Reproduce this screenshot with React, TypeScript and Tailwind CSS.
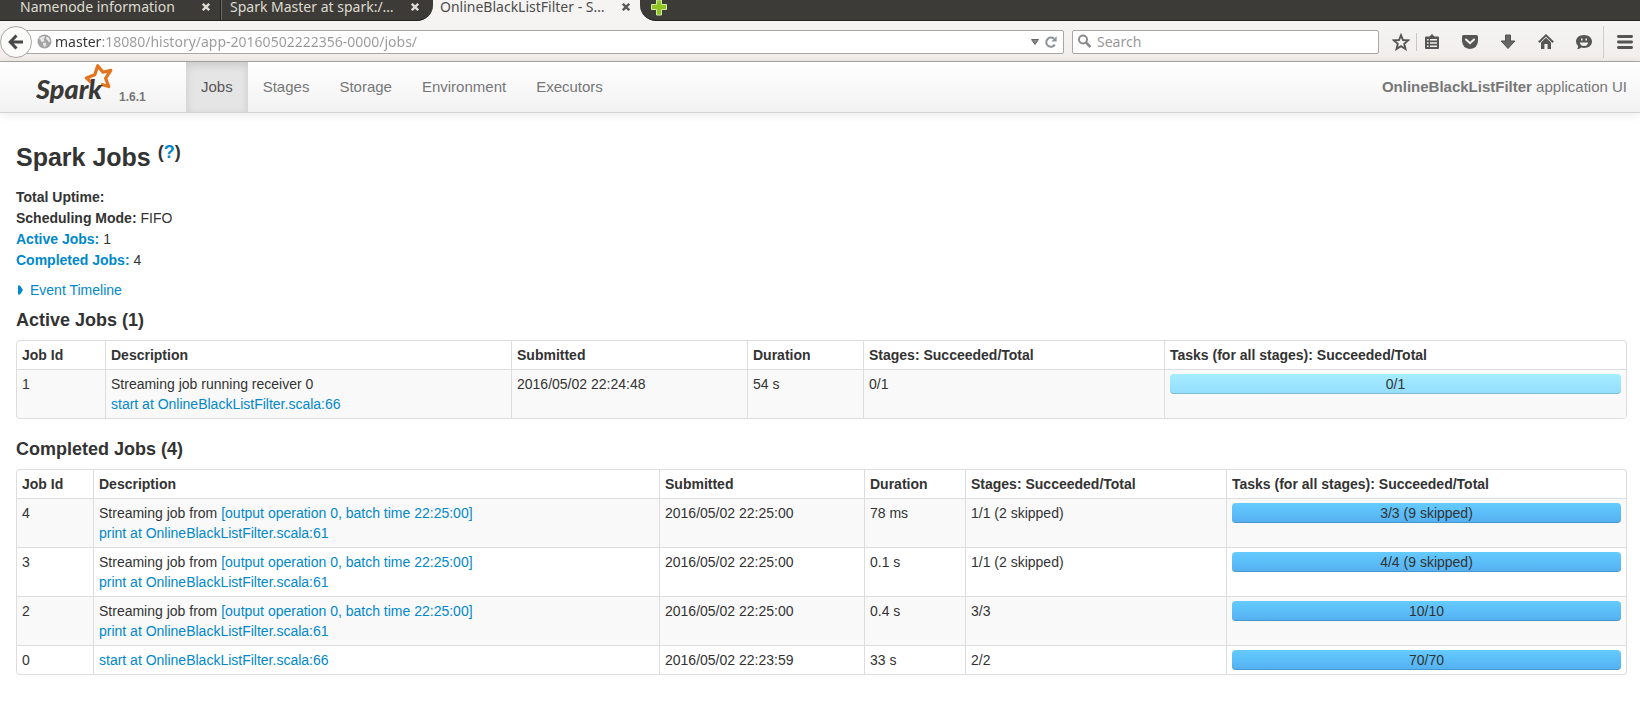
import type { ReactNode } from "react";
import clsx from "clsx";

interface Job {
  id: number;
  text?: string;
  batch?: string;
  link: string;
  submitted: string;
  duration: string;
  stages: string;
  tasks: string;
  running?: boolean;
}

const activeJobs: Job[] = [
  { id: 1, text: "Streaming job running receiver 0", link: "start at OnlineBlackListFilter.scala:66", submitted: "2016/05/02 22:24:48", duration: "54 s", stages: "0/1", tasks: "0/1", running: true },
];

const batch = "[output operation 0, batch time 22:25:00]";

const completedJobs: Job[] = [
  { id: 4, text: "Streaming job from", batch, link: "print at OnlineBlackListFilter.scala:61", submitted: "2016/05/02 22:25:00", duration: "78 ms", stages: "1/1 (2 skipped)", tasks: "3/3 (9 skipped)" },
  { id: 3, text: "Streaming job from", batch, link: "print at OnlineBlackListFilter.scala:61", submitted: "2016/05/02 22:25:00", duration: "0.1 s", stages: "1/1 (2 skipped)", tasks: "4/4 (9 skipped)" },
  { id: 2, text: "Streaming job from", batch, link: "print at OnlineBlackListFilter.scala:61", submitted: "2016/05/02 22:25:00", duration: "0.4 s", stages: "3/3", tasks: "10/10" },
  { id: 0, link: "start at OnlineBlackListFilter.scala:66", submitted: "2016/05/02 22:23:59", duration: "33 s", stages: "2/2", tasks: "70/70" },
];

const headers = ["Job Id", "Description", "Submitted", "Duration", "Stages: Succeeded/Total", "Tasks (for all stages): Succeeded/Total"];

function CloseButton({ light }: { light?: boolean }) {
  return (
    <button aria-label="Close tab" className={clsx("flex h-[14px] w-3 items-center justify-center", light ? "text-[#dfdbd2]" : "text-[#5c5a57]")}>
      <svg width="8" height="8" viewBox="0 0 8 8" stroke="currentColor" strokeWidth="2.4">
        <path d="M0.8 0.8L7.2 7.2M7.2 0.8L0.8 7.2" />
      </svg>
    </button>
  );
}

function TabStrip() {
  return (
    <div className="flex h-[21px] bg-[#f5f4f3] text-[14px] leading-[14px]">
      <div className="flex w-[433px] shrink-0 rounded-br-[16px] border-b border-[#22211e] bg-[#3c3b37] text-[#dfdbd2]">
        <div className="flex w-[221px] justify-between border-r border-[#24231f] pr-2 pl-5">
          <button className="h-[14px] whitespace-nowrap">Namenode information</button>
          <CloseButton light />
        </div>
        <div className="flex flex-1 justify-between border-l border-[#6b6963] pr-3 pl-2">
          <button className="h-[14px] whitespace-nowrap">Spark Master at spark:/…</button>
          <CloseButton light />
        </div>
      </div>
      <div className="flex w-[207px] shrink-0 justify-between pr-2 pl-[7px] text-[#4c4c4c]">
        <button className="h-[14px] whitespace-nowrap">OnlineBlackListFilter - S…</button>
        <CloseButton />
      </div>
      <div className="flex flex-1 rounded-bl-[16px] border-b border-[#22211e] bg-[#3c3b37] pl-[11px]">
        <button aria-label="New tab" className="h-[14px]">
          <svg width="16" height="16" viewBox="0 0 16 16">
            <path d="M5.5 0H10.5V4.5H15.5V9.5H10.5V15H5.5V9.5H0.5V4.5H5.5Z" fill="#8fc224" stroke="#d5e8a5" />
          </svg>
        </button>
      </div>
    </div>
  );
}

function ToolButton({ label, children }: { label: string; children: ReactNode }) {
  return (
    <button aria-label={label} className="flex w-[38px] justify-center text-[#555]">
      <svg width="18" height="18" viewBox="0 0 18 18" fill="currentColor">{children}</svg>
    </button>
  );
}

function Toolbar() {
  return (
    <div className="flex h-[41px] items-center border-b border-[#aaa8a5] bg-linear-to-b from-[#f5f4f3] to-[#f1eeec] pt-px text-[14px]">
      <button aria-label="Back" className="z-10 -mr-2 flex size-8 shrink-0 items-center justify-center rounded-full border border-[#a9a7a5] bg-[#fbfbfa]">
        <svg width="16" height="16" viewBox="0 0 16 16" fill="none" stroke="#484848" strokeWidth="3">
          <path d="M15 8H3M8.5 1.5L2.2 8L8.5 14.5" />
        </svg>
      </button>
      <div className="flex h-6 flex-1 items-center rounded-r-[2px] border border-[#a9a7a5] bg-white pr-1 pl-3">
        <svg width="15" height="15" viewBox="0 0 15 15" className="shrink-0">
          <circle cx="7.5" cy="7.5" r="7" fill="#a3a3a3" />
          <path d="M2 4.5L5 2.5L7.5 2L8 4L6.5 5L7.5 6.5L6 8L4 7.5L3.5 5.8ZM6 9L8.5 8.5L9.5 10.5L8 13L6.5 12ZM9.5 2.5L12 4L13.5 7L12 8.5L10.5 6L9 5Z" fill="#e8e8e8" />
        </svg>
        <input
          aria-label="Address"
          defaultValue="master:18080/history/app-20160502222356-0000/jobs/"
          className="ml-[3px] min-w-0 flex-1 bg-[linear-gradient(to_right,#333_47px,#999_47px)] bg-clip-text text-transparent outline-none"
        />
        <button aria-label="Show history" className="flex w-4 justify-center">
          <svg width="8" height="6" viewBox="0 0 8 6"><path d="M0.5 0.5H7.5L4 5.5Z" fill="#888" stroke="#666" /></svg>
        </button>
        <button aria-label="Reload" className="flex w-4 justify-center">
          <svg width="12" height="12" viewBox="0 0 12 12">
            <path d="M9.8 8.6A4.6 4.6 0 1 1 9 2.8" fill="none" stroke="#8b929a" strokeWidth="2" />
            <path d="M11.6 0.2V5.4H6.4Z" fill="#8b929a" />
          </svg>
        </button>
      </div>
      <div className="ml-2 flex h-6 w-[307px] items-center rounded-[2px] border border-[#a9a7a5] bg-white px-1">
        <svg width="15" height="15" viewBox="0 0 15 15" fill="none" stroke="#8c8c8c" strokeWidth="2">
          <circle cx="6" cy="5.5" r="4" />
          <path d="M8.8 8.3L13.5 13" strokeWidth="2.6" />
        </svg>
        <input aria-label="Search" placeholder="Search" className="ml-[5px] min-w-0 flex-1 outline-none placeholder:text-[#999]" />
      </div>
      <div className="flex shrink-0 items-center pl-[3px]">
        <ToolButton label="Bookmark">
          <path d="M9 2.2L11 7L16.2 7.4L12.2 10.8L13.5 16L9 13.2L4.5 16L5.8 10.8L1.8 7.4L7 7Z" fill="none" stroke="currentColor" strokeWidth="1.9" />
        </ToolButton>
        <div className="-ml-1 h-[18px] w-px bg-[#c9c7c5]" />
        <div className="-ml-1 flex">
          <ToolButton label="Bookmarks list">
            <path fillRule="evenodd" d="M3 3.5H6.5L9 1L11.5 3.5H15Q16 3.5 16 4.5V15Q16 16 15 16H3Q2 16 2 15V4.5Q2 3.5 3 3.5ZM4 6V7.6H5.6V6ZM7 6V7.6H14V6ZM4 9.2V10.8H5.6V9.2ZM7 9.2V10.8H14V9.2ZM4 12.4V14H5.6V12.4ZM7 12.4V14H14V12.4Z" />
          </ToolButton>
          <ToolButton label="Pocket">
            <path d="M2.5 2H15.5Q17 2 17 3.5V8Q16.5 15.5 9 16Q1.5 15.5 1 8V3.5Q1 2 2.5 2Z" />
            <path d="M5 6.5L9 10.2L13 6.5" fill="none" stroke="#f4f2f1" strokeWidth="2" strokeLinecap="round" />
          </ToolButton>
          <ToolButton label="Downloads">
            <path d="M6.5 2H11.5V8H15.8L9 15.5L2.2 8H6.5Z" fill="#666" stroke="#505050" />
          </ToolButton>
          <ToolButton label="Home">
            <path d="M1.8 9.2L9 2.2L16.2 9.2" fill="none" stroke="currentColor" strokeWidth="1.9" />
            <path d="M4 9.5L9 4.7L14 9.5V16H10.6V11H7.4V16H4Z" />
          </ToolButton>
          <ToolButton label="Chat">
            <path d="M9 2C13.6 2 17 4.8 17 8.500S13.600 15 9 15Q7.500 15 6.200 14.600Q4.500 16.200 2 16.200Q3.200 15 3.100 13Q1 11.200 1 8.500C1 4.800 4.400 2 9 2Z" />
            <path d="M4.800 9.500H13.200Q12.500 13 9 13T4.800 9.500ZM6 5.500H7.600V7.500H6ZM10.400 5.500H12V7.500H10.400Z" fill="#f4f2f1" />
          </ToolButton>
        </div>
        <div className="h-8 w-px bg-[#cfcdcb]" />
        <div className="-mr-1 flex pl-[2px]">
          <ToolButton label="Menu">
            <path d="M2.400 3.500H15.600M2.400 9H15.600M2.400 14.500H15.600" stroke="currentColor" strokeWidth="2.800" strokeLinecap="round" />
          </ToolButton>
        </div>
      </div>
    </div>
  );
}

function SparkLogo() {
  return (
    <svg width="80" height="44" viewBox="0 0 80 44" role="img" aria-label="Spark">
      <path
        d="M65 22.300L72.700 24.500L69.600 16.300L74.800 8.300L67 10.200L61.700 3.800L58.800 12.800L50.400 16L55.500 20.500"
        fill="none" stroke="#e3741d" strokeWidth="3.200" strokeLinejoin="round"
      />
      <text x="0" y="37" fontFamily="Lato, sans-serif" fontSize="27" fontWeight="900" fontStyle="italic" fill="#3b3937">Spark</text>
    </svg>
  );
}

function Navbar() {
  const tabs = ["Jobs", "Stages", "Storage", "Environment", "Executors"];
  return (
    <header className="flex h-[51px] border-b border-[#d4d4d4] bg-linear-to-b from-white to-[#f2f2f2] text-[15px] text-[#777] shadow-[0_1px_10px_rgba(0,0,0,0.1)]">
      <a href="#" className="flex w-[186px] shrink-0 items-start pl-9">
        <SparkLogo />
        <span className="mt-[27px] ml-[3px] text-[12px] leading-4 font-bold">1.6.1</span>
      </a>
      <nav className="flex">
        {tabs.map((tab, i) => (
          <a
            key={tab}
            href="#"
            className={clsx("flex items-center px-[15px]", i === 0 && "bg-[#e5e5e5] text-[#555] shadow-[inset_0_3px_8px_rgba(0,0,0,0.125)]")}
          >
            {tab}
          </a>
        ))}
      </nav>
      <p className="ml-auto self-center pr-[13px]">
        <strong>OnlineBlackListFilter</strong> application UI
      </p>
    </header>
  );
}

function JobTable({ jobs, cols }: { jobs: Job[]; cols: string[] }) {
  return (
    <table className="w-full table-fixed border-separate border-spacing-0 rounded-[4px] border border-l-0 border-[#ddd] text-left">
      <colgroup>
        {cols.map((c, i) => <col key={i} className={c} />)}
      </colgroup>
      <thead>
        <tr>
          {headers.map((h) => (
            <th key={h} className="border-l border-[#ddd] px-[5px] py-1 font-bold first:rounded-tl-[4px]">{h}</th>
          ))}
        </tr>
      </thead>
      <tbody className="[&_td]:border-t [&_td]:border-l [&_td]:border-[#ddd] [&_td]:px-[5px] [&_td]:py-1 [&_td]:align-top [&_tr:last-child_td:first-child]:rounded-bl-[4px] [&_tr:nth-child(odd)_td]:bg-[#f9f9f9]">
        {jobs.map((job) => (
          <tr key={job.id}>
            <td>{job.id}</td>
            <td>
              {job.text && (
                <div>
                  {job.text} {job.batch && <a href="#" className="text-[#08c]">{job.batch}</a>}
                </div>
              )}
              <a href="#" className="text-[#08c]">{job.link}</a>
            </td>
            <td>{job.submitted}</td>
            <td>{job.duration}</td>
            <td>{job.stages}</td>
            <td>
              <div
                className={clsx(
                  "h-5 rounded-[4px] bg-linear-to-b text-center shadow-[inset_0_-1px_0_rgba(0,0,0,0.15)]",
                  job.running ? "from-[#a4edff] to-[#94ddff]" : "from-[#64cbff] to-[#54b0f0]"
                )}
              >
                {job.tasks}
              </div>
            </td>
          </tr>
        ))}
      </tbody>
    </table>
  );
}

export default function App() {
  return (
    <div className="min-h-screen bg-white font-['Liberation_Sans',Arial,sans-serif] text-[14px] leading-5 text-[#333]">
      <div className="font-['Noto_Sans','Open_Sans',sans-serif]">
        <TabStrip />
        <Toolbar />
      </div>
      <Navbar />

      <main className="px-4 pt-6 pr-[13px] pb-10">
        <h3 className="text-[25px] leading-10 font-bold">
          Spark Jobs <sup className="relative -top-2 align-baseline text-[18px] leading-none">(<a href="#" className="text-[#08c]">?</a>)</sup>
        </h3>

        {/* Summary */}
        <ul className="mt-[10px] leading-[21px]">
          <li><strong>Total Uptime:</strong></li>
          <li><strong>Scheduling Mode:</strong> FIFO</li>
          <li><a href="#active" className="font-bold text-[#08c]">Active Jobs:</a> 1</li>
          <li><a href="#completed" className="font-bold text-[#08c]">Completed Jobs:</a> 4</li>
        </ul>

        <button className="mt-[9px] flex items-center text-[#08c]">
          <svg width="14" height="10" viewBox="0 0 14 10"><path d="M2 0.500H4L7 5L4 9.500H2Z" fill="currentColor" /></svg>
          Event Timeline
        </button>

        <h4 id="active" className="mt-[10px] mb-[10px] text-[18px] leading-5 font-bold">Active Jobs (1)</h4>
        <JobTable jobs={activeJobs} cols={["w-[89px]", "w-[406px]", "w-[236px]", "w-[116px]", "w-[301px]", ""]} />

        <h4 id="completed" className="mt-5 mb-[10px] text-[18px] leading-5 font-bold">Completed Jobs (4)</h4>
        <JobTable jobs={completedJobs} cols={["w-[77px]", "w-[566px]", "w-[205px]", "w-[101px]", "w-[261px]", ""]} />
      </main>
    </div>
  );
}
